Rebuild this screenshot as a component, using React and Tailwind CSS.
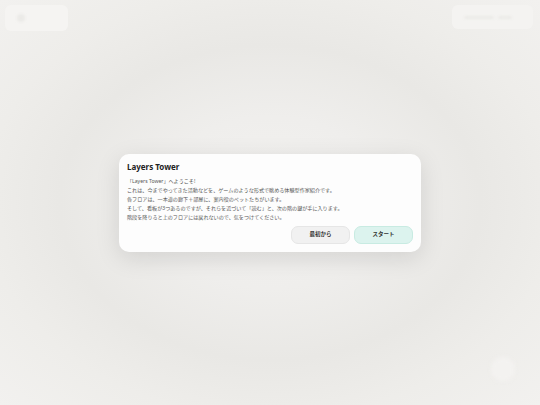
const lines = [
  '「Layers Tower」へようこそ!',
  'これは、今までやってきた活動などを、ゲームのような形式で眺める体験型作家紹介です。',
  '各フロアは、一本道の廊下＋部屋に、案内役のペットたちがいます。',
  'そして、看板が3つあるのですが、それらを近づいて「読む」と、次の階の鍵が手に入ります。',
  '階段を降りると上のフロアには戻れないので、気をつけてください。',
];

const App = () => {
  return (
    <div
      className="relative w-[540px] h-[405px] overflow-hidden bg-[radial-gradient(ellipse_at_50%_50%,#f3f2f0_0%,#efeeec_30%,#e9e8e5_55%,#eeedea_75%,#f2f1ef_100%)]"
      style={{ fontFamily: '"Noto Sans", "Noto Sans CJK JP", sans-serif' }}
    >
      {/* blurred game HUD behind the modal */}
      <div className="absolute left-[5px] top-[5px] w-[63px] h-[26px] rounded-md bg-[#f5f4f2] blur-[0.5px] flex items-center px-3">
        <div className="w-[8px] h-[8px] rounded-full bg-[#ebeae7] blur-[1px]" />
      </div>
      <div className="absolute left-[452px] top-[5px] w-[81px] h-[24px] rounded-md bg-[#f4f3f1] blur-[0.5px] flex items-center gap-1 px-3">
        <div className="w-[30px] h-[3px] rounded bg-[#ecebe8] blur-[1px]" />
        <div className="w-[14px] h-[3px] rounded bg-[#ecebe8] blur-[1px]" />
      </div>
      <div className="absolute left-[491px] top-[357px] w-[24px] h-[24px] rounded-full bg-[#f3f2f0] blur-[2px]" />

      <div className="flex items-center justify-center w-full h-full">
        <div className="w-[302px] rounded-[10px] bg-[#fdfdfd] shadow-[0_6px_24px_rgba(0,0,0,0.12)] px-[8px] pt-[7px] pb-[8px]">
          <div className="text-[8px] font-bold text-[#222] leading-[12px]">Layers Tower</div>
          <div className="mt-[4px] text-[5.1px] leading-[9px] text-[#555]">
            {lines.map((l, i) => (
              <div key={i}>{l}</div>
            ))}
          </div>
          <div className="flex justify-end gap-[4px] mt-[4px]">
            <button className="w-[59px] h-[18px] rounded-[7px] bg-[#f1f1f1] border border-[#e6e6e6] text-[5.5px] font-bold text-[#333]">
              最初から
            </button>
            <button className="w-[59px] h-[18px] rounded-[7px] bg-[#dcf3ee] border border-[#c8ebe2] text-[5.5px] font-bold text-[#333]">
              スタート
            </button>
          </div>
        </div>
      </div>
    </div>
  );
};

export default App;
